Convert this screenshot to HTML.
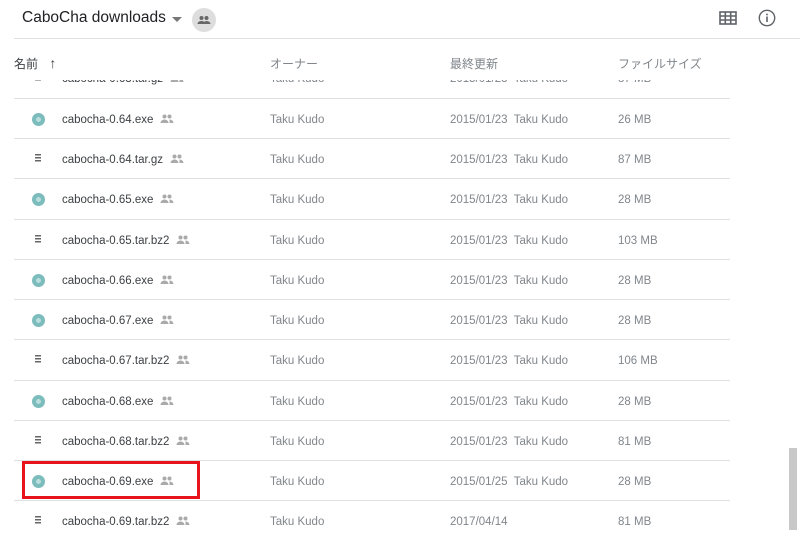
<!DOCTYPE html>
<html><head><meta charset="utf-8"><style>
body{margin:0;width:800px;height:541px;overflow:hidden;background:#fff;font-family:"Liberation Sans","Noto Sans CJK JP",sans-serif;position:relative}
.t{position:absolute;left:22px;top:9px;font-size:15.5px;color:#202124}
.car{position:absolute;left:172px;top:17px;width:0;height:0;border-left:5px solid transparent;border-right:5px solid transparent;border-top:5px solid #777}
.sh{position:absolute;left:192px;top:8px;width:24px;height:24px;border-radius:50%;background:#ddd}
.hl{position:absolute;left:14px;right:0;top:38px;border-top:1px solid #e0e0e0}
.ch{position:absolute;top:55px;font-size:12px;color:#80868b}
.body{position:absolute;left:0;top:80px;width:800px;height:461px;overflow:hidden}
.row{position:absolute;left:14px;width:716px;height:40px;border-top:1px solid #e0e0e0;font-size:11.5px}
.row>span{position:absolute;top:15px}
.n{left:48px;color:#3c4043}
.o{left:256px;color:#80868b}
.d{left:436px;color:#80868b}
.s{left:604px;color:#80868b}
.ex{position:absolute;left:18px;top:14px;width:13px;height:13px;border-radius:50%;background:#7cbcbc}
.ex::after{content:"";position:absolute;left:4px;top:4px;width:5px;height:5px;border-radius:50%;background:#b9dede}
.ar{position:absolute;left:21px;top:15px;width:6px;height:9px;background:repeating-linear-gradient(#666 0 1.5px,transparent 1.5px 3px)}
.pp{display:inline-block;margin-left:7px;vertical-align:-1px}
</style></head><body>
<svg width="0" height="0" style="position:absolute"><defs><symbol id="p" viewBox="0 0 14 10"><circle cx="4.5" cy="2.5" r="2" fill="#aaa"/><circle cx="9.5" cy="2.5" r="2" fill="#aaa"/><path d="M0.5 9c0-2 2-3.5 4-3.5s4 1.5 4 3.5zM9.5 5.5c2 0 4 1.5 4 3.5h-4z" fill="#aaa"/></symbol></defs></svg>
<div class="t">CaboCha downloads</div><div class="car"></div>
<div class="sh"><svg width="24" height="24" viewBox="0 0 24 24"><circle cx="9.5" cy="10" r="2" fill="#666"/><circle cx="14.5" cy="10" r="2" fill="#666"/><path d="M5.5 16c0-2 2-3 4-3s4 1 4 3zM11.5 16c0-1.5 1.5-3 3-3s4 1 4 3z" fill="#666"/></svg></div>
<svg style="position:absolute;left:719px;top:11px" width="18" height="14" viewBox="0 0 18 14"><rect x="1" y="1" width="16" height="12" fill="none" stroke="#5f6368" stroke-width="1.6"/><path d="M1 5h16M1 9h16M6.3 1v12M11.7 1v12" stroke="#5f6368" stroke-width="1.6"/></svg>
<svg style="position:absolute;left:758px;top:9px" width="18" height="18" viewBox="0 0 18 18"><circle cx="9" cy="9" r="7.7" fill="none" stroke="#5f6368" stroke-width="1.4"/><rect x="8.2" y="7.5" width="1.6" height="5.5" fill="#5f6368"/><rect x="8.2" y="4.7" width="1.6" height="1.6" fill="#5f6368"/></svg>
<div class="hl"></div>
<div class="ch" style="left:14px;color:#3c4043">名前 <span style="margin-left:8px;font-size:14px">↑</span></div>
<div class="ch" style="left:270px">オーナー</div>
<div class="ch" style="left:450px">最終更新</div>
<div class="ch" style="left:618px">ファイルサイズ</div>
<div class="body">
<div class="row" style="top:-22px;border-top:none"><div class="ar"></div><span class="n">cabocha-0.63.tar.gz<svg class="pp" width="14" height="10"><use href="#p"/></svg></span><span class="o">Taku Kudo</span><span class="d">2015/01/23&nbsp; Taku Kudo</span><span class="s">87 MB</span></div>
<div class="row" style="top:18px"><div class="ex"></div><span class="n">cabocha-0.64.exe<svg class="pp" width="14" height="10"><use href="#p"/></svg></span><span class="o">Taku Kudo</span><span class="d">2015/01/23&nbsp; Taku Kudo</span><span class="s">26 MB</span></div>
<div class="row" style="top:58px"><div class="ar"></div><span class="n">cabocha-0.64.tar.gz<svg class="pp" width="14" height="10"><use href="#p"/></svg></span><span class="o">Taku Kudo</span><span class="d">2015/01/23&nbsp; Taku Kudo</span><span class="s">87 MB</span></div>
<div class="row" style="top:98px"><div class="ex"></div><span class="n">cabocha-0.65.exe<svg class="pp" width="14" height="10"><use href="#p"/></svg></span><span class="o">Taku Kudo</span><span class="d">2015/01/23&nbsp; Taku Kudo</span><span class="s">28 MB</span></div>
<div class="row" style="top:139px"><div class="ar"></div><span class="n">cabocha-0.65.tar.bz2<svg class="pp" width="14" height="10"><use href="#p"/></svg></span><span class="o">Taku Kudo</span><span class="d">2015/01/23&nbsp; Taku Kudo</span><span class="s">103 MB</span></div>
<div class="row" style="top:179px"><div class="ex"></div><span class="n">cabocha-0.66.exe<svg class="pp" width="14" height="10"><use href="#p"/></svg></span><span class="o">Taku Kudo</span><span class="d">2015/01/23&nbsp; Taku Kudo</span><span class="s">28 MB</span></div>
<div class="row" style="top:219px"><div class="ex"></div><span class="n">cabocha-0.67.exe<svg class="pp" width="14" height="10"><use href="#p"/></svg></span><span class="o">Taku Kudo</span><span class="d">2015/01/23&nbsp; Taku Kudo</span><span class="s">28 MB</span></div>
<div class="row" style="top:259px"><div class="ar"></div><span class="n">cabocha-0.67.tar.bz2<svg class="pp" width="14" height="10"><use href="#p"/></svg></span><span class="o">Taku Kudo</span><span class="d">2015/01/23&nbsp; Taku Kudo</span><span class="s">106 MB</span></div>
<div class="row" style="top:300px"><div class="ex"></div><span class="n">cabocha-0.68.exe<svg class="pp" width="14" height="10"><use href="#p"/></svg></span><span class="o">Taku Kudo</span><span class="d">2015/01/23&nbsp; Taku Kudo</span><span class="s">28 MB</span></div>
<div class="row" style="top:340px"><div class="ar"></div><span class="n">cabocha-0.68.tar.bz2<svg class="pp" width="14" height="10"><use href="#p"/></svg></span><span class="o">Taku Kudo</span><span class="d">2015/01/23&nbsp; Taku Kudo</span><span class="s">81 MB</span></div>
<div class="row" style="top:380px"><div class="ex"></div><span class="n">cabocha-0.69.exe<svg class="pp" width="14" height="10"><use href="#p"/></svg></span><span class="o">Taku Kudo</span><span class="d">2015/01/25&nbsp; Taku Kudo</span><span class="s">28 MB</span></div>
<div class="row" style="top:420px;border-bottom:1px solid #e0e0e0"><div class="ar"></div><span class="n">cabocha-0.69.tar.bz2<svg class="pp" width="14" height="10"><use href="#p"/></svg></span><span class="o">Taku Kudo</span><span class="d">2017/04/14</span><span class="s">81 MB</span></div>
</div>
<div style="position:absolute;left:22px;top:461px;width:178px;height:38px;border:3px solid #e8141c;box-sizing:border-box"></div>
<div style="position:absolute;left:789px;top:448px;width:8px;height:82px;background:#c8c8c8"></div>
</body></html>
